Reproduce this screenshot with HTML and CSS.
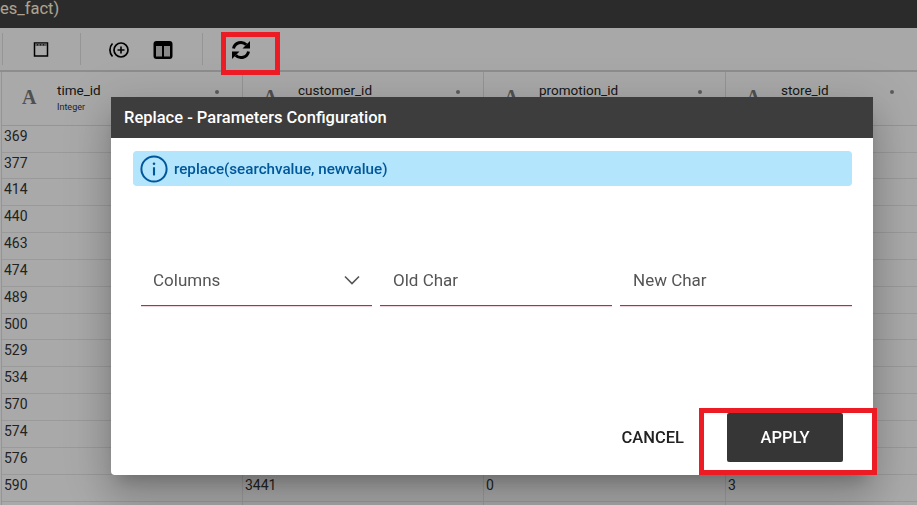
FILE: index.html
```html
<!DOCTYPE html>
<html lang="en">
<head>
    <meta charset="UTF-8">
    <meta name="viewport" content="width=device-width, initial-scale=1.0">
    <title>Replace - Parameters Configuration</title>
    <link rel="stylesheet" href="styles.css">
</head>
<body>
    <div class="titlebar">es_fact)</div>

    <div class="toolbar">
        <div class="tool-group tool-group-first">
            <svg class="tool-icon" viewBox="0 0 20 20" width="20" height="20"><rect x="3.500" y="3" width="13" height="13" fill="none" stroke="#000" stroke-width="1.500"/><path d="M4 3.500h12v2.500h-12z" fill="#8a8a8a"/><path d="M6 4.800h1M9 4.800h1M12 4.800h1" stroke="#000" stroke-width="1"/></svg>
        </div>
        <div class="tool-group tool-group-second">
            <svg class="tool-icon" viewBox="0 0 22 20" width="22" height="20"><circle cx="13" cy="10" r="7" fill="none" stroke="#000" stroke-width="1.700"/><path d="M13 6.500v7M9.500 10h7" stroke="#000" stroke-width="1.600"/><path d="M4.500 3.500a9.500 9.500 0 0 0 0 13" fill="none" stroke="#000" stroke-width="1.700"/></svg>
            <svg class="tool-icon" viewBox="0 0 20 20" width="20" height="20"><rect x="0.500" y="1" width="19" height="18" rx="3" fill="#000"/><path d="M3 6h6v10.500h-6zM11 6h6v10.500h-6z" fill="#c9c9c9"/></svg>
        </div>
        <div class="tool-group tool-group-third">
            <svg class="tool-icon" viewBox="0 0 20 20" width="20" height="20"><path d="M2.500 8.500a7.500 7.500 0 0 1 12.800-3.700" fill="none" stroke="#000" stroke-width="3"/><path d="M19 1v7.500h-7.500z" fill="#000"/><path d="M17.500 11.500a7.500 7.500 0 0 1-12.800 3.700" fill="none" stroke="#000" stroke-width="3"/><path d="M1 19v-7.500h7.500z" fill="#000"/></svg>
        </div>
    </div>

    <div class="sheet">
        <div class="head-cell"><span class="type-icon">A</span><div class="head-text"><div class="head-name">time_id</div><div class="head-type">Integer</div></div><span class="head-dot"></span></div>
        <div class="head-cell"><span class="type-icon">A</span><div class="head-text"><div class="head-name">customer_id</div><div class="head-type">Integer</div></div><span class="head-dot"></span></div>
        <div class="head-cell"><span class="type-icon">A</span><div class="head-text"><div class="head-name">promotion_id</div><div class="head-type">Integer</div></div><span class="head-dot"></span></div>
        <div class="head-cell"><span class="type-icon">A</span><div class="head-text"><div class="head-name">store_id</div><div class="head-type">Integer</div></div><span class="head-dot"></span></div>

        <div class="cell">369</div><div class="cell"></div><div class="cell"></div><div class="cell"></div>
        <div class="cell">377</div><div class="cell"></div><div class="cell"></div><div class="cell"></div>
        <div class="cell">414</div><div class="cell"></div><div class="cell"></div><div class="cell"></div>
        <div class="cell">440</div><div class="cell"></div><div class="cell"></div><div class="cell"></div>
        <div class="cell">463</div><div class="cell"></div><div class="cell"></div><div class="cell"></div>
        <div class="cell">474</div><div class="cell"></div><div class="cell"></div><div class="cell"></div>
        <div class="cell">489</div><div class="cell"></div><div class="cell"></div><div class="cell"></div>
        <div class="cell">500</div><div class="cell"></div><div class="cell"></div><div class="cell"></div>
        <div class="cell">529</div><div class="cell"></div><div class="cell"></div><div class="cell"></div>
        <div class="cell">534</div><div class="cell"></div><div class="cell"></div><div class="cell"></div>
        <div class="cell">570</div><div class="cell"></div><div class="cell"></div><div class="cell"></div>
        <div class="cell">574</div><div class="cell"></div><div class="cell"></div><div class="cell"></div>
        <div class="cell">576</div><div class="cell"></div><div class="cell"></div><div class="cell"></div>
        <div class="cell">590</div><div class="cell">3441</div><div class="cell">0</div><div class="cell">3</div>
        <div class="cell"></div><div class="cell"></div><div class="cell"></div><div class="cell"></div>
    </div>

    <div class="scrim"></div>

    <div class="dialog">
        <div class="dialog-title">Replace - Parameters Configuration</div>
        <div class="dialog-body">
            <div class="hint">
                <svg viewBox="0 0 24 24" width="28" height="28"><circle cx="12" cy="12" r="10.800" fill="none" stroke="#01579b" stroke-width="1.700"/><path d="M12 10.500v7" stroke="#01579b" stroke-width="1.800"/><circle cx="12" cy="7.500" r="1.100" fill="#01579b"/></svg>
                <span>replace(searchvalue, newvalue)</span>
            </div>
            <div class="fields">
                <div class="field field-select">
                    <span>Columns</span>
                    <svg viewBox="0 0 16 10" width="16" height="10"><path d="M1 1.500l7 7 7-7" fill="none" stroke="#555" stroke-width="1.600"/></svg>
                </div>
                <div class="field">Old Char</div>
                <div class="field">New Char</div>
            </div>
        </div>
        <div class="dialog-actions">
            <button class="btn-cancel">CANCEL</button>
            <button class="btn-apply">APPLY</button>
        </div>
    </div>

    <!-- red boxes drawn on top of the screenshot -->
    <div class="mark mark-refresh"></div>
    <div class="mark mark-apply"></div>
</body>
</html>
```

FILE: styles.css
```css
* {
    box-sizing: border-box;
}
html, body {
    height: 100%;
}
body {
    margin: 0;
    overflow: hidden;
    font-family: Roboto, "Liberation Sans", sans-serif;
    background-color: #fafafa;
    color: #333;
}
.titlebar {
    height: 28px;
    padding-top: 1px;
    background-color: #404040;
    color: #fff0d8;
    font-size: 16.500px;
    line-height: 16px;
}
.toolbar {
    height: 44px;
    display: flex;
    padding: 5px 0 5px 2px;
    background-color: #f8f8f8;
    border-bottom: 2px solid #d0d0d0;
}
.tool-group {
    display: flex;
    align-items: center;
    padding-top: 2px;
    border-left: 1px solid #dcdcdc;
}
.tool-group-first {
    width: 78px;
    padding-left: 28px;
}
.tool-group-second {
    width: 122px;
    padding-left: 27px;
    gap: 23px;
}
.tool-group-third {
    padding-left: 28px;
}
.sheet {
    display: grid;
    grid-template-columns: 241px 241px 242px 192px;
    grid-auto-rows: 26.850px;
    margin-left: 1px;
    border-left: 1px solid #dcdcdc;
}
.head-cell {
    grid-row: span 2;
    display: flex;
    padding: 10px 23px 0 20px;
    background-color: #fafafa;
    border-right: 1px solid #dcdcdc;
    border-bottom: 1px solid #dcdcdc;
}
.type-icon {
    width: 35px;
    padding-top: 4px;
    font-family: "Liberation Serif", serif;
    font-size: 20px;
    font-weight: bold;
    color: #777;
}
.head-text {
    flex: 1;
}
.head-name {
    font-size: 13.500px;
    color: #222;
    line-height: 17px;
}
.head-type {
    font-size: 9px;
    color: #333;
    margin-top: 3px;
}
.head-dot {
    width: 4px;
    height: 4px;
    margin-top: 8px;
    border-radius: 50%;
    background-color: #888;
}
.cell {
    padding-left: 2px;
    font-size: 14px;
    line-height: 21px;
    color: #333;
    border-right: 1px solid #e4e4e4;
    border-bottom: 1px solid #e4e4e4;
}
.scrim {
    position: fixed;
    inset: 0;
    background-color: rgba(0, 0, 0, 0.32);
}
.dialog {
    position: absolute;
    left: 111px;
    top: 97px;
    width: 762px;
    height: 378px;
    display: flex;
    flex-direction: column;
    background-color: #fff;
    border-radius: 0 0 4px 4px;
    box-shadow: 0 11px 15px -7px rgba(0,0,0,.2), 0 24px 38px 3px rgba(0,0,0,.14), 0 9px 46px 8px rgba(0,0,0,.12);
}
.dialog-title {
    height: 41px;
    padding-left: 13px;
    background-color: #3d3d3d;
    color: #fff;
    font-size: 16.500px;
    font-weight: 500;
    line-height: 41px;
}
.dialog-body {
    flex: 1;
    padding: 13px 21px 0 22px;
}
.hint {
    height: 35px;
    display: flex;
    align-items: center;
    gap: 6px;
    padding-left: 7px;
    background-color: #b3e5fc;
    border-radius: 4px;
    color: #01579b;
    font-size: 15.200px;
    font-weight: 500;
}
.fields {
    display: flex;
    gap: 8px;
    margin: 64px 0 0 8px;
}
.field {
    flex: 1;
    height: 56px;
    display: flex;
    align-items: center;
    justify-content: space-between;
    padding: 4px 12px 0 13px;
    color: #555;
    font-size: 17px;
    border-bottom: 1px solid #a8324f;
    box-shadow: 0 1px 0 #f2d5dc;
}
.field-select {
    padding-left: 12px;
}
.dialog-actions {
    display: flex;
    align-items: center;
    justify-content: flex-end;
    padding: 0 30px 13px 0;
}
.btn-cancel, .btn-apply {
    border: none;
    font-family: inherit;
    font-size: 16.500px;
    font-weight: 500;
}
.btn-cancel {
    padding: 0;
    margin-right: 43px;
    background: none;
    color: #222;
}
.btn-apply {
    width: 116px;
    height: 49px;
    background-color: #363636;
    color: #fff;
    border-radius: 2px;
}
.mark {
    position: absolute;
    border: 5px solid #ed1c24;
}
.mark-refresh {
    left: 221px;
    top: 32px;
    width: 59px;
    height: 43px;
}
.mark-apply {
    left: 699px;
    top: 408px;
    width: 178px;
    height: 67px;
}
```
